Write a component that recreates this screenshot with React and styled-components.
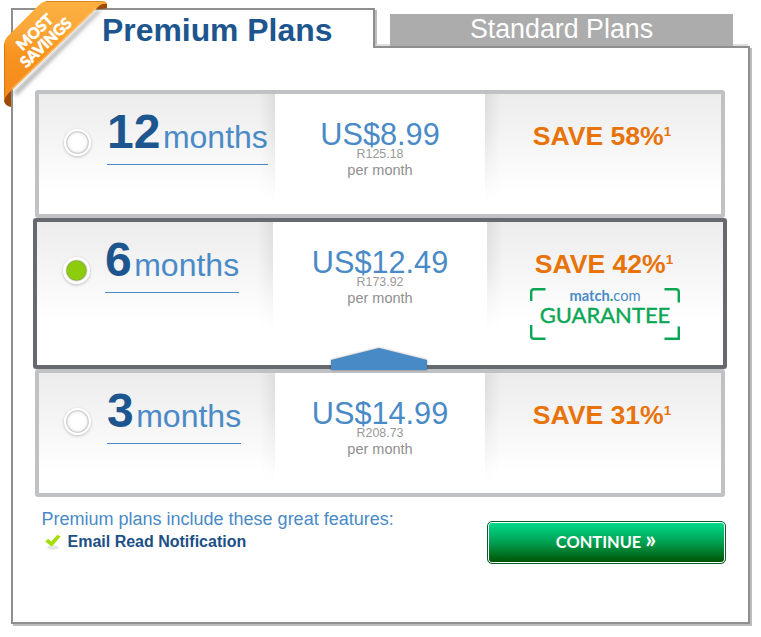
import React, { useState } from "react";
import styled, { createGlobalStyle } from "styled-components";

const plans = [
  { id: 12, usd: "US$8.99", local: "R125.18", save: "SAVE 58%" },
  { id: 6, usd: "US$12.49", local: "R173.92", save: "SAVE 42%", guarantee: true },
  { id: 3, usd: "US$14.99", local: "R208.73", save: "SAVE 31%" },
];

const Ribbon = () => (
  <RibbonSvg width="112" height="112" viewBox="0 0 112 112">
    <defs>
      <linearGradient id="ribbon" x1="0" y1="0" x2="0" y2="1">
        <stop offset="0" stopColor="#fbb040" />
        <stop offset="0.25" stopColor="#fba93a" />
        <stop offset="0.55" stopColor="#f7931e" />
        <stop offset="1" stopColor="#f58a1c" />
      </linearGradient>
      <filter id="soft" x="-20%" y="-20%" width="140%" height="140%">
        <feGaussianBlur stdDeviation="2" />
      </filter>
    </defs>
    <path d="M14 93 L98 10 L101 10 L16 95 Z" fill="#000" opacity="0.5" filter="url(#soft)" />
    <path d="M95 9 Q107 9 107 8 V4 Q106 1 101 1 Z" fill="#9c4a04" />
    <path d="M4 94 V101 Q5 106 11 107 V90 Z" fill="#9c4a04" />
    <path d="M4 46 Q4 40 8 36 L39 5 Q43 1 48 1 H101 Q106 1 107 4 Q101 3 96 9 L12 90 Q5 96 4 101 Z" fill="url(#ribbon)" />
    <path d="M12 89 L96 8" stroke="#fdc67c" strokeWidth="1.5" opacity="0.7" />
    <path d="M46 1.5 H102" stroke="#e0861c" strokeWidth="1" />
    <path d="M4.5 44 V98" stroke="#d97810" strokeWidth="1" />
    <g
      fill="#fff"
      stroke="#fff"
      strokeWidth="0.7"
      fontFamily="Lato, sans-serif"
      fontWeight="700"
      fontSize="15.2"
      textAnchor="middle"
    >
      <text transform="translate(38.5 36) rotate(-43.5)">MOST</text>
      <text transform="translate(49.5 46.5) rotate(-43.5)">SAVINGS</text>
    </g>
  </RibbonSvg>
);

const Guarantee = () => (
  <GuaranteeBox>
    <Corners width="150" height="52" viewBox="0 0 150 52">
      <path
        d="M1.2 13 V4 Q1.2 1.2 4 1.2 H15.5 M134.5 1.2 H146 Q148.8 1.2 148.8 4 V14.5 M148.8 38.5 V50.8 H134.5 M15.5 50.8 H4 Q1.2 50.8 1.2 48 V37"
        fill="none"
        stroke="#0ba653"
        strokeWidth="2.4"
      />
    </Corners>
    <Brand>
      <b>match</b>
      <i>.</i>com
    </Brand>
    <Word>GUARANTEE</Word>
  </GuaranteeBox>
);

const Check = () => (
  <svg width="18" height="18" viewBox="0 0 18 18">
    <ellipse cx="8" cy="14.5" rx="6" ry="2.2" fill="#e6e6e6" />
    <path
      d="M0.2 8.6 L3 5.8 L6.2 8.6 L12.4 1.8 L15.6 3.4 L6.8 13.8 Z"
      fill="#a6de0c"
      stroke="#fff"
      strokeWidth="1"
      paintOrder="stroke"
    />
  </svg>
);

const App = () => {
  const [selected, setSelected] = useState(6);

  return (
    <>
      <GlobalStyle />
      <Page>
        <Ribbon />
        <Tabs>
          <ActiveTab>Premium Plans</ActiveTab>
          <TabGap $first />
          <Tab>Standard Plans</Tab>
          <TabGap />
        </Tabs>

        <Panel>
          <Rows>
            {plans.map((plan) => {
              const active = plan.id === selected;
              return (
                <Row key={plan.id} $active={active} onClick={() => setSelected(plan.id)}>
                  <Term $active={active}>
                    <Radio $active={active} />
                    <Length>
                      <b>{plan.id}</b>
                      <span>months</span>
                    </Length>
                  </Term>

                  <Cost>
                    <Price>{plan.usd}</Price>
                    <Local>{plan.local}</Local>
                    <Per>per month</Per>
                  </Cost>

                  <Saving>
                    <Save>
                      {plan.save}
                      <sup>1</sup>
                    </Save>
                    {plan.guarantee && <Guarantee />}
                  </Saving>

                  {active && (
                    <Pointer width="96" height="22" viewBox="0 0 96 22">
                      <path d="M0 12 L48 0 L96 12 V22 H0 Z" fill="#488ac6" />
                    </Pointer>
                  )}
                </Row>
              );
            })}
          </Rows>

          <Footer>
            <Features>
              <Intro>Premium plans include these great features:</Intro>
              <Feature>
                <Check />
                Email Read Notification
              </Feature>
            </Features>
            <Button type="button">
              CONTINUE <span>»</span>
            </Button>
          </Footer>
        </Panel>
      </Page>
    </>
  );
};

export default App;

// STYLING

const GlobalStyle = createGlobalStyle`
  body {
    margin: 0;
    background: #fff;
    font-family: "Liberation Sans", Arial, sans-serif;
    overflow: hidden;
  }
  * {
    box-sizing: border-box;
  }
`;

const Page = styled.div`
  position: relative;
  width: 761px;
  height: 637px;
  padding: 8px 0 0 11px;
`;

const RibbonSvg = styled.svg`
  position: absolute;
  top: 0;
  left: 0;
  z-index: 2;
`;

const Tabs = styled.div`
  display: flex;
  align-items: flex-end;
  width: 737px;
  height: 38px;
`;

const ActiveTab = styled.div`
  position: relative;
  z-index: 1;
  width: 364px;
  height: 40px;
  margin-bottom: -2px;
  padding-left: 89px;
  border: 2px solid #8f8f8f;
  border-bottom: none;
  background: #fff;
  color: #1d568e;
  font-size: 31.9px;
  font-weight: bold;
  line-height: 40px;
`;

const TabGap = styled.div`
  width: 15px;
  height: 36px;
  border-left: ${({ $first }) => ($first ? "2px solid #bdbdbd" : "none")};
  border-bottom: 2px solid #dedede;
`;

const Tab = styled.div`
  width: 343px;
  height: 32px;
  background: #acacac;
  color: #fff;
  font-size: 26.8px;
  line-height: 30px;
  text-align: center;
`;

const Panel = styled.div`
  width: 739px;
  height: 578px;
  padding: 42px 22px 0;
  border: 2px solid #8f8f8f;
  box-shadow: 2px 2px 0 #bcbcbc;
`;

const Rows = styled.div`
  width: 690px;
`;

const Row = styled.div`
  position: relative;
  display: flex;
  height: ${({ $active }) => ($active ? "151px" : "128px")};
  margin: ${({ $active }) => ($active ? "0 -2px" : "0")};
  border: 4px solid ${({ $active }) => ($active ? "#66696f" : "#c0c1c5")};
  border-radius: 3px;
  cursor: pointer;
`;

const Side = styled.div`
  width: 236px;
  flex: none;
  background: linear-gradient(#ececec, #fff 100px);

  &::after {
    content: "";
    position: absolute;
    top: 0;
    width: 16px;
    height: 112px;
    mask-image: linear-gradient(#000 30%, transparent);
  }
`;

const Term = styled(Side)`
  display: flex;
  align-items: flex-start;
  gap: ${({ $active }) => ($active ? "15px" : "16px")};
  padding-left: ${({ $active }) => ($active ? "26px" : "25px")};

  &::after {
    left: 220px;
    background: linear-gradient(to left, rgba(0, 0, 0, 0.06), transparent);
  }
`;

const Saving = styled(Side)`
  padding-top: 27px;

  &::after {
    right: 220px;
    background: linear-gradient(to right, rgba(0, 0, 0, 0.06), transparent);
  }
`;

const Radio = styled.div`
  width: 27px;
  height: 27px;
  margin-top: 35px;
  border-radius: 50%;
  background: ${({ $active }) =>
    $active
      ? "radial-gradient(circle closest-side, #8ccc0c 9px, #7fae2a 9.6px, #ddd 10.6px, #fff 11.4px)"
      : "radial-gradient(circle closest-side, #fff 7px, #f4f4f4 9.5px, #c9c9c9 10.8px, #fff 11.8px)"};
  box-shadow: 0 1px 3px rgba(0, 0, 0, 0.25);
`;

const Length = styled.div`
  display: flex;
  align-items: baseline;
  gap: 2.5px;
  height: 57px;
  margin-top: 14px;
  border-bottom: 1px solid #4a8ac6;

  b {
    color: #1d568e;
    font-size: 48px;
    line-height: 48px;
  }

  span {
    color: #4a8ac6;
    font-size: 32px;
    line-height: 32px;
  }
`;

const Cost = styled.div`
  flex: 1;
  padding-top: 25px;
  background: #fff;
  text-align: center;
`;

const Price = styled.div`
  color: #4a8ac6;
  font-size: 30.7px;
  line-height: 32px;
`;

const Local = styled.div`
  margin-top: -3px;
  color: #999;
  font-size: 12.4px;
  line-height: 12px;
`;

const Per = styled.div`
  margin-top: 2px;
  color: #8f8f8f;
  font-size: 14.5px;
  line-height: 16px;
`;

const Save = styled.div`
  padding-right: 2px;
  color: #e8730a;
  font-size: 26.6px;
  font-weight: bold;
  line-height: 30px;
  text-align: center;

  sup {
    position: relative;
    top: -9px;
    font-size: 13.5px;
    line-height: 0;
    vertical-align: baseline;
  }
`;

const GuaranteeBox = styled.div`
  position: relative;
  width: 150px;
  height: 52px;
  margin: 9px auto 0;
  text-align: center;
  font-family: Lato, sans-serif;
`;

const Corners = styled.svg`
  position: absolute;
  top: 0;
  left: 0;
`;

const Brand = styled.div`
  color: #4a8ac6;
  font-size: 14.7px;
  line-height: 14px;

  i {
    color: #0ba653;
    font-style: normal;
    font-weight: bold;
  }
`;

const Word = styled.div`
  color: #0ba653;
  font-size: 22px;
  line-height: 26px;
  -webkit-text-stroke: 0.4px #0ba653;
`;

const Pointer = styled.svg`
  position: absolute;
  left: 294px;
  bottom: -5px;
  z-index: 1;
  overflow: visible;
  filter: drop-shadow(0 0 1px rgba(0, 0, 0, 0.4));
`;

const Footer = styled.div`
  display: flex;
  justify-content: space-between;
  width: 691px;
  padding-left: 6.5px;
`;

const Features = styled.div`
  padding-top: 12px;
`;

const Intro = styled.div`
  color: #4a8ac6;
  font-size: 18px;
  line-height: 20px;
`;

const Feature = styled.div`
  display: flex;
  align-items: center;
  gap: 5px;
  margin-top: 3px;
  padding-left: 3px;
  color: #1c4f85;
  font-size: 16px;
  font-weight: bold;
  line-height: 20px;
`;

const Button = styled.button`
  width: 239px;
  height: 43px;
  margin-top: 24px;
  padding: 0 1px 3px 0;
  border: 1px solid #0b5c2c;
  border-radius: 5px;
  background: linear-gradient(#00dc8e, #00a050 50%, #005000);
  box-shadow: inset 0 0 0 1px #fff;
  color: #fff;
  font-family: Lato, sans-serif;
  font-size: 16.4px;
  font-weight: bold;
  cursor: pointer;

  span {
    font-size: 24px;
    line-height: 16px;
  }
`;
